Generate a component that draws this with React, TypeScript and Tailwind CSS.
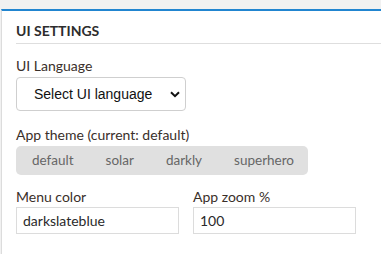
import { useState } from "react";

const themes = ["default", "solar", "darkly", "superhero"];

export default function App() {
  const [menuColor, setMenuColor] = useState("darkslateblue");
  const [zoom, setZoom] = useState("100");

  return (
    <div className="w-[381px] h-[254px] overflow-hidden bg-[#f1f1f1] pt-[9px] pl-px font-['Lato',sans-serif] text-[#333]">
      <div className="h-[260px] w-[420px] bg-white border-t-2 border-t-[#2185d0] border-l border-l-[#dcdcdc] pl-[14px] pt-[10px]">
        <div className="border-b border-[#dedede] pb-[2px] text-[14px] leading-[20px] font-bold text-[#2d2d2d]">
          UI SETTINGS
        </div>

        <div className="mt-[13px] text-[14px] leading-[18px] text-[#3a2f2a]">UI Language</div>
        <div className="mt-[2px] flex h-[34px] w-[170px] items-center rounded-[4px] border border-[#cfcfcf] bg-white font-[Arial,sans-serif] text-[14px] text-[#111]">
          <span className="ml-[17px] w-[136px] whitespace-nowrap">Select UI language</span>
          <svg width="10" height="7" viewBox="0 0 10 7" className="text-[#111]">
            <path d="M1 1.2 L5 5.2 L9 1.2" fill="none" stroke="currentColor" strokeWidth="2" />
          </svg>
        </div>

        <div className="mt-[15px] text-[14px] leading-[18px] text-[#3a2f2a]">App theme (current: default)</div>
        <div className="mt-[2px] flex h-[29px] w-[292px] items-center rounded-[5px] bg-[#e0e0e0] text-[13.5px] text-[#666]">
          {themes.map((t) => (
            <span key={t} className="px-4">
              {t}
            </span>
          ))}
        </div>

        <div className="mt-[13px] flex gap-[14px]">
          <div className="w-[163px]">
            <div className="text-[14px] leading-[18px] text-[#3a2f2a]">Menu color</div>
            <input
              value={menuColor}
              onChange={(e) => setMenuColor(e.target.value)}
              className="mt-px h-[27px] w-[163px] border border-[#dcdcdc] px-[6px] text-[14px] text-[#2a2a2a] outline-none"
            />
          </div>
          <div className="w-[163px]">
            <div className="text-[14px] leading-[18px] text-[#3a2f2a]">App zoom %</div>
            <input
              value={zoom}
              onChange={(e) => setZoom(e.target.value)}
              className="mt-px h-[27px] w-[163px] border border-[#dcdcdc] px-[6px] text-[14px] text-[#2a2a2a] outline-none"
            />
          </div>
        </div>
      </div>
    </div>
  );
}
